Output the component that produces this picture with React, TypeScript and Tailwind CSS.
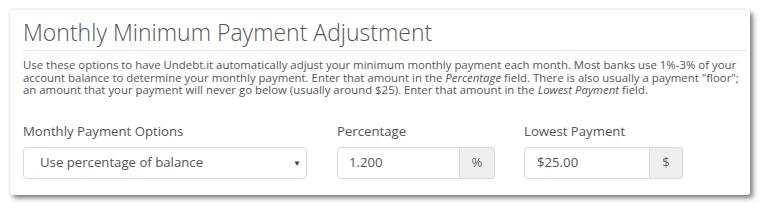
export default function App() {
  return (
    <div className="bg-white w-[768px] h-[213px] p-[10px]" style={{ fontFamily: '"Open Sans", sans-serif' }}>
      <div className="w-[740px] h-[185px] bg-white rounded-[3px] shadow-[3px_3px_5px_rgba(0,0,0,0.5),0_0_3px_rgba(0,0,0,0.12)] pl-[13px] pr-[3px] pt-[8px]">
        <h1 className="text-[23px] leading-[28px] font-light text-[#555] pb-[4px] border-b border-[#e5e5e5]">
          Monthly Minimum Payment Adjustment
        </h1>
        <p className="text-[11.4px] leading-[12.6px] text-[#555] mt-[8px]">
          Use these options to have Undebt.it automatically adjust your minimum monthly payment each month. Most banks use 1%-3% of your account balance to determine your monthly payment. Enter that amount in the <em>Percentage</em> field. There is also usually a payment "floor"; an amount that your payment will never go below (usually around $25). Enter that amount in the <em>Lowest Payment</em> field.
        </p>
        <div className="flex mt-[25px] text-[#555]">
          <div className="w-[284px]">
            <label className="block text-[13.2px] leading-[18px] mb-[7px]">Monthly Payment Options</label>
            <div className="h-[32px] border border-[#d5d9e0] rounded-[4px] flex items-center pl-[16px] pr-[5px] text-[13.2px]">
              <span className="flex-1">Use percentage of balance</span>
              <span className="text-[8px] text-[#444]">▼</span>
            </div>
          </div>
          <div className="w-[158px] ml-[30px]">
            <label className="block text-[13.2px] leading-[18px] mb-[7px]">Percentage</label>
            <div className="h-[32px] flex text-[13.2px]">
              <div className="flex-1 border border-[#d5d9e0] rounded-l-[4px] flex items-center pl-[11px]">1.200</div>
              <div className="w-[35px] border border-l-0 border-[#d5d9e0] bg-[#eeeeee] rounded-r-[4px] flex items-center justify-center text-[#666]">%</div>
            </div>
          </div>
          <div className="w-[159px] ml-[29px]">
            <label className="block text-[13.2px] leading-[18px] mb-[7px]">Lowest Payment</label>
            <div className="h-[32px] flex text-[13.2px]">
              <div className="flex-1 border border-[#d5d9e0] rounded-l-[4px] flex items-center pl-[12px]">$25.00</div>
              <div className="w-[33px] border border-l-0 border-[#d5d9e0] bg-[#eeeeee] rounded-r-[4px] flex items-center justify-center text-[#666]">$</div>
            </div>
          </div>
        </div>
      </div>
    </div>
  );
}
